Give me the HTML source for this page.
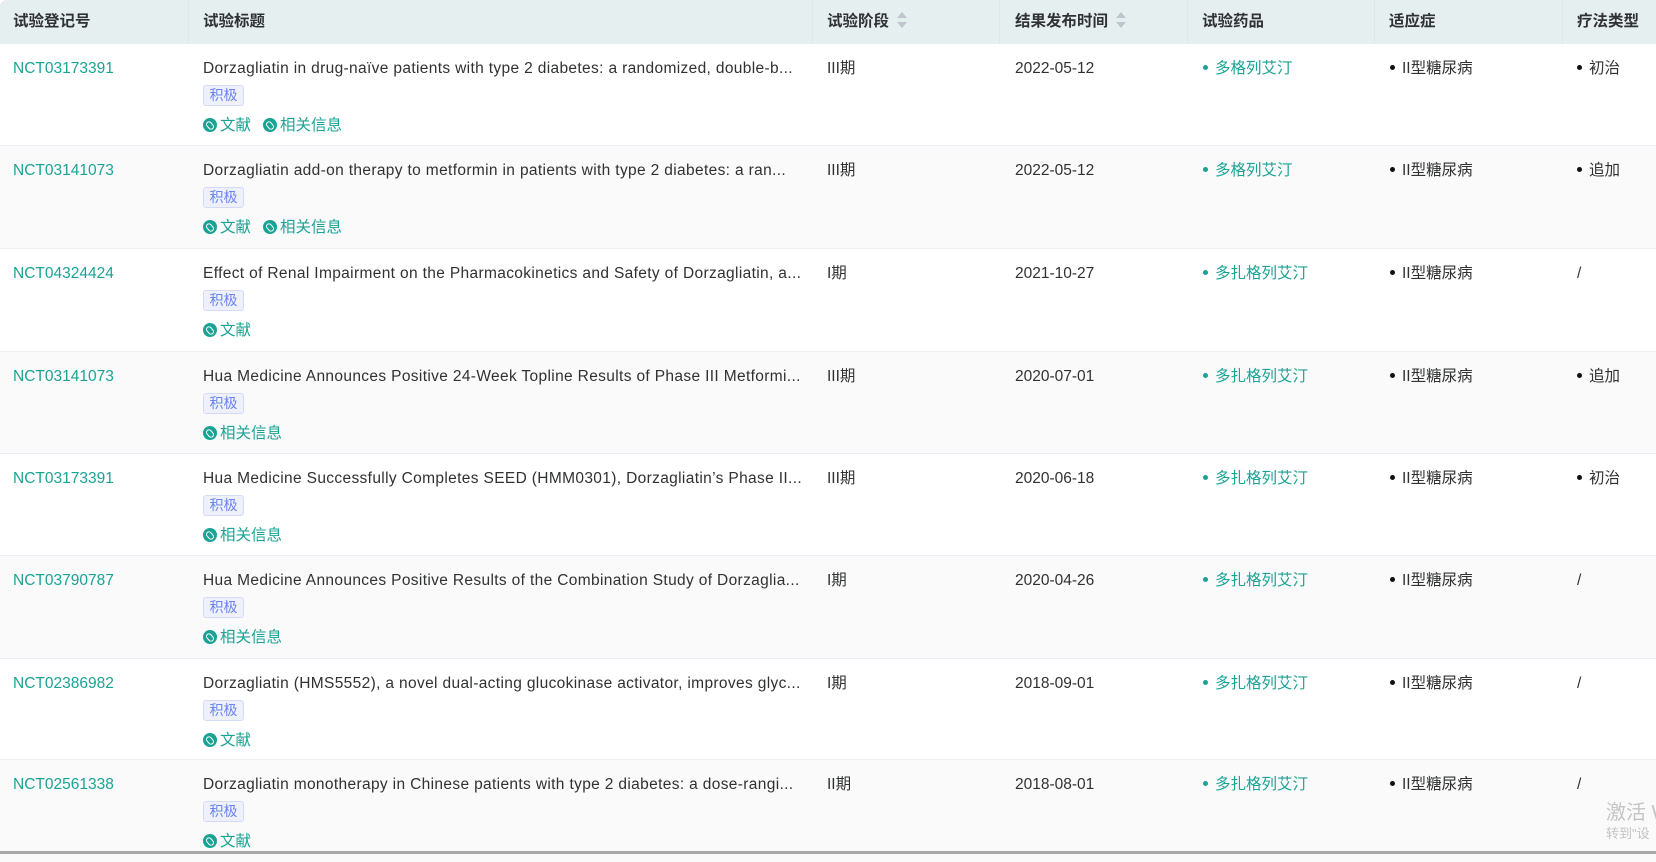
<!DOCTYPE html>
<html><head><meta charset="utf-8"><style>
*{margin:0;padding:0;box-sizing:border-box}
body{width:1656px;height:854px;overflow:hidden;background:#fff;font-family:"Liberation Sans","Noto Sans CJK SC",sans-serif;font-size:15.5px;color:#303133;position:relative}
.hdr{position:absolute;left:0;top:0;width:1656px;height:44px;background:#e6eff0;border-radius:6px 0 0 0}
.hdr div{position:absolute;top:0;height:44px;line-height:44px;font-weight:bold;color:#303133}
.vl{position:absolute;top:0;width:1px;height:44px;background:#dde8ea}
.sort{display:inline-block;vertical-align:middle;margin-left:8px;width:10px;height:16px;position:relative;top:-2px}
.sort:before,.sort:after{content:"";position:absolute;left:0;border-left:5px solid transparent;border-right:5px solid transparent}
.sort:before{top:0;border-bottom:6px solid #c0c4cc}
.sort:after{bottom:0;border-top:6px solid #c0c4cc}
.row{position:absolute;left:0;width:1656px;border-bottom:1px solid #ebeef5}
.row.alt{background:#fafafa}
.c{position:absolute;top:14px;line-height:22px;white-space:nowrap}
.id{left:13px;color:#1aa394}
.tt{left:203px;letter-spacing:0.35px}
.tag{position:absolute;left:203px;top:41px;width:41px;height:21px;line-height:19px;text-align:center;background:#eef0fb;border:1px solid #d6dbf5;border-radius:3px;color:#6a84f0;font-size:14px}
.links{position:absolute;left:203px;top:71px;line-height:22px;color:#1aa394;white-space:nowrap}
.links span{margin-right:12px}
.ic{display:inline-block;width:14px;height:14px;border-radius:50%;background:#1aa394;vertical-align:-2px;margin-right:3px;position:relative}
.ic:after{content:"";position:absolute;left:4px;top:3px;width:4px;height:7px;border:1.5px solid #fff;border-radius:3px;transform:rotate(-40deg)}
.ph{left:827px}.dt{left:1015px}
.dr{left:1203px;color:#1aa394}
.ds{left:1390px}
.ty{left:1577px}
.dot{display:inline-block;width:5px;height:5px;border-radius:50%;margin-right:7px;vertical-align:3px}
.dr .dot{background:#1aa394}.ds .dot,.ty .dot{background:#111}
</style></head><body>
<div class="hdr">
<div style="left:13px">试验登记号</div>
<div style="left:203px">试验标题</div>
<div style="left:827px">试验阶段<span class="sort"></span></div>
<div style="left:1015px">结果发布时间<span class="sort"></span></div>
<div style="left:1202px">试验药品</div>
<div style="left:1389px">适应症</div>
<div style="left:1577px">疗法类型</div>
<span class="vl" style="left:188px"></span><span class="vl" style="left:812px"></span><span class="vl" style="left:999px"></span><span class="vl" style="left:1187px"></span><span class="vl" style="left:1374px"></span><span class="vl" style="left:1562px"></span>
</div>

<div class="row" style="top:44px;height:102px">
<div class="c id">NCT03173391</div><div class="c tt">Dorzagliatin in drug-naïve patients with type 2 diabetes: a randomized, double-b...</div>
<div class="tag">积极</div><div class="links"><span><i class="ic"></i>文献</span><span><i class="ic"></i>相关信息</span></div>
<div class="c ph">III期</div><div class="c dt">2022-05-12</div><div class="c dr"><i class="dot"></i>多格列艾汀</div><div class="c ds"><i class="dot"></i>II型糖尿病</div><div class="c ty"><i class="dot"></i>初治</div>
</div>
<div class="row alt" style="top:146px;height:103px">
<div class="c id">NCT03141073</div><div class="c tt">Dorzagliatin add-on therapy to metformin in patients with type 2 diabetes: a ran...</div>
<div class="tag">积极</div><div class="links"><span><i class="ic"></i>文献</span><span><i class="ic"></i>相关信息</span></div>
<div class="c ph">III期</div><div class="c dt">2022-05-12</div><div class="c dr"><i class="dot"></i>多格列艾汀</div><div class="c ds"><i class="dot"></i>II型糖尿病</div><div class="c ty"><i class="dot"></i>追加</div>
</div>
<div class="row" style="top:249px;height:103px">
<div class="c id">NCT04324424</div><div class="c tt">Effect of Renal Impairment on the Pharmacokinetics and Safety of Dorzagliatin, a...</div>
<div class="tag">积极</div><div class="links"><span><i class="ic"></i>文献</span></div>
<div class="c ph">I期</div><div class="c dt">2021-10-27</div><div class="c dr"><i class="dot"></i>多扎格列艾汀</div><div class="c ds"><i class="dot"></i>II型糖尿病</div><div class="c ty">/</div>
</div>
<div class="row alt" style="top:352px;height:102px">
<div class="c id">NCT03141073</div><div class="c tt">Hua Medicine Announces Positive 24-Week Topline Results of Phase III Metformi...</div>
<div class="tag">积极</div><div class="links"><span><i class="ic"></i>相关信息</span></div>
<div class="c ph">III期</div><div class="c dt">2020-07-01</div><div class="c dr"><i class="dot"></i>多扎格列艾汀</div><div class="c ds"><i class="dot"></i>II型糖尿病</div><div class="c ty"><i class="dot"></i>追加</div>
</div>
<div class="row" style="top:454px;height:102px">
<div class="c id">NCT03173391</div><div class="c tt">Hua Medicine Successfully Completes SEED (HMM0301), Dorzagliatin’s Phase II...</div>
<div class="tag">积极</div><div class="links"><span><i class="ic"></i>相关信息</span></div>
<div class="c ph">III期</div><div class="c dt">2020-06-18</div><div class="c dr"><i class="dot"></i>多扎格列艾汀</div><div class="c ds"><i class="dot"></i>II型糖尿病</div><div class="c ty"><i class="dot"></i>初治</div>
</div>
<div class="row alt" style="top:556px;height:103px">
<div class="c id">NCT03790787</div><div class="c tt">Hua Medicine Announces Positive Results of the Combination Study of Dorzaglia...</div>
<div class="tag">积极</div><div class="links"><span><i class="ic"></i>相关信息</span></div>
<div class="c ph">I期</div><div class="c dt">2020-04-26</div><div class="c dr"><i class="dot"></i>多扎格列艾汀</div><div class="c ds"><i class="dot"></i>II型糖尿病</div><div class="c ty">/</div>
</div>
<div class="row" style="top:659px;height:101px">
<div class="c id">NCT02386982</div><div class="c tt">Dorzagliatin (HMS5552), a novel dual-acting glucokinase activator, improves glyc...</div>
<div class="tag">积极</div><div class="links"><span><i class="ic"></i>文献</span></div>
<div class="c ph">I期</div><div class="c dt">2018-09-01</div><div class="c dr"><i class="dot"></i>多扎格列艾汀</div><div class="c ds"><i class="dot"></i>II型糖尿病</div><div class="c ty">/</div>
</div>
<div class="row alt" style="top:760px;height:102px;border:0">
<div class="c id">NCT02561338</div><div class="c tt">Dorzagliatin monotherapy in Chinese patients with type 2 diabetes: a dose-rangi...</div>
<div class="tag">积极</div><div class="links"><span><i class="ic"></i>文献</span></div>
<div class="c ph">II期</div><div class="c dt">2018-08-01</div><div class="c dr"><i class="dot"></i>多扎格列艾汀</div><div class="c ds"><i class="dot"></i>II型糖尿病</div><div class="c ty">/</div>
</div>
<div style="position:absolute;left:1606px;top:796px;font-size:20px;color:#c4c4c4;white-space:nowrap">激活 W</div>
<div style="position:absolute;left:1606px;top:823px;font-size:13px;color:#c4c4c4;white-space:nowrap">转到"设</div>
<div style="position:absolute;left:0;top:851px;width:1656px;height:3px;background:#a8a8a8"></div>
</body></html>
